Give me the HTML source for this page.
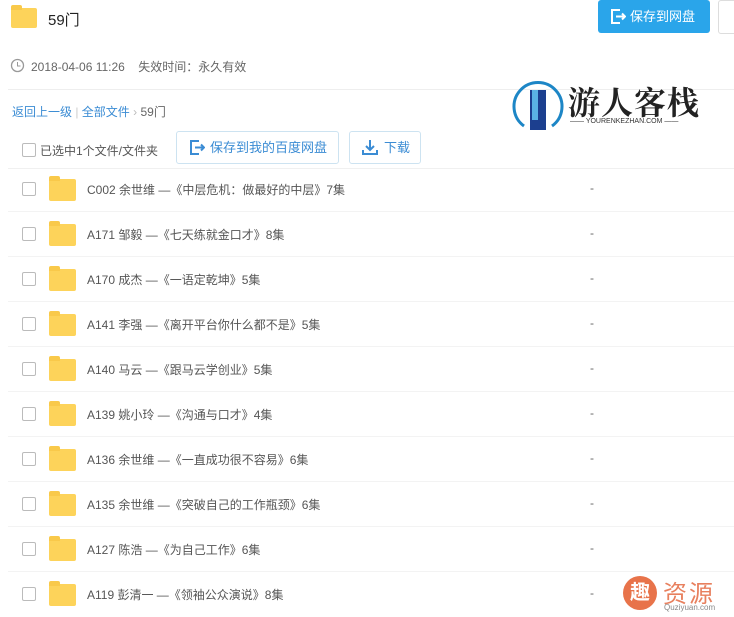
<!DOCTYPE html><html><head><meta charset="utf-8"><style>
body{margin:0;width:734px;height:615px;overflow:hidden;background:#fff;font-family:"Liberation Sans","Noto Sans CJK SC",sans-serif;color:#333;position:relative}
.a{position:absolute}
.fold{position:absolute;width:27px;height:22px;background:#fdd35a;border-radius:2px}
.fold:before{content:"";position:absolute;left:0;top:-3px;width:11px;height:5px;background:#f9c94a;border-radius:2px 2px 0 0}
.cb{position:absolute;width:12px;height:12px;border:1px solid #bbb;border-radius:2px;background:#fff}
.row{position:absolute;left:0;width:734px;height:45px}
.row .t{position:absolute;left:87px;top:14px;font-size:12px;color:#555}
.row .d{position:absolute;left:590px;top:14px;font-size:12px;color:#666}
.row .l{position:absolute;left:8px;right:0;top:44px;height:1px;background:#f3f3f3}
</style></head><body>
<div class="fold" style="left:11px;top:8px;width:26px;height:20px"></div>
<div class="a" style="left:48px;top:9px;font-size:15px;color:#222">59门</div>
<div class="a" style="left:598px;top:0;width:112px;height:33px;background:#2aa5ea;border-radius:3px;color:#fff;font-size:13px;line-height:33px">
<svg class="a" style="left:12px;top:9px" width="16" height="15" viewBox="0 0 16 15"><path d="M10 1H2v13h8M6 7.5h9M12 4.5l3 3-3 3" stroke="#fff" stroke-width="2" fill="none"/></svg>
<span class="a" style="left:32px;top:0">保存到网盘</span></div>
<div class="a" style="left:718px;top:0;width:20px;height:32px;border:1px solid #ddd;border-radius:3px"></div>
<svg class="a" style="left:10px;top:58px" width="15" height="15"><circle cx="7.5" cy="7.5" r="6" stroke="#999" fill="none" stroke-width="1.3"/><path d="M7.5 4v4h3" stroke="#999" fill="none"/></svg>
<div class="a" style="left:31px;top:58px;font-size:12px;color:#666">2018-04-06 11:26 &nbsp;&nbsp; 失效时间：永久有效</div>
<div class="a" style="left:8px;top:89px;width:726px;height:1px;background:#eee"></div>
<div class="a" style="left:12px;top:103px;font-size:12px;color:#3b8cd4">返回上一级 <span style="color:#ccc">|</span> 全部文件 <span style="color:#bbb">›</span> <span style="color:#666">59门</span></div>
<svg class="a" style="left:508px;top:76px" width="60" height="54"><path d="M16 50A24 24 0 1 1 44 50" stroke="#1d86c6" stroke-width="3" fill="none"/><rect x="22" y="14" width="16" height="42" fill="#1c3f8f"/><rect x="24" y="14" width="6" height="30" fill="#5ab2e4"/></svg>
<div class="a" style="left:568px;top:78px;font-size:32px;font-weight:bold;color:#222;letter-spacing:1px;font-family:'Noto Serif CJK SC',serif">游人客栈</div>
<div class="a" style="left:570px;top:118px;font-size:7px;color:#333;letter-spacing:0">—— YOURENKEZHAN.COM ——</div>
<div class="cb" style="left:22px;top:143px"></div>
<div class="a" style="left:40px;top:142px;font-size:12px;color:#555">已选中1个文件/文件夹</div>
<div class="a" style="left:176px;top:131px;width:161px;height:31px;border:1px solid #cde3f1;border-radius:3px;color:#3b8cd4;font-size:13px;line-height:31px">
<svg class="a" style="left:12px;top:8px" width="16" height="15"><path d="M10 1H2v13h8M6 7.5h9M12 4.5l3 3-3 3" stroke="#3b8cd4" stroke-width="2" fill="none"/></svg>
<span class="a" style="left:33px;top:0">保存到我的百度网盘</span></div>
<div class="a" style="left:349px;top:131px;width:70px;height:31px;border:1px solid #cde3f1;border-radius:3px;color:#3b8cd4;font-size:13px;line-height:31px">
<svg class="a" style="left:12px;top:7px" width="16" height="16"><path d="M8 1v10M4 7l4 4 4-4M1 11v4h14v-4" stroke="#3b8cd4" stroke-width="2" fill="none"/></svg>
<span class="a" style="left:34px;top:0">下载</span></div>
<div class="a" style="left:8px;top:168px;width:726px;height:1px;background:#f0f0f0"></div>

<div class="row" style="top:167px"><div class="cb" style="left:22px;top:15px"></div><div class="fold" style="left:49px;top:12px"></div><div class="t">C002 余世维 —《中层危机：做最好的中层》7集</div><div class="d">-</div><div class="l"></div></div>
<div class="row" style="top:212px"><div class="cb" style="left:22px;top:15px"></div><div class="fold" style="left:49px;top:12px"></div><div class="t">A171 邹毅 —《七天练就金口才》8集</div><div class="d">-</div><div class="l"></div></div>
<div class="row" style="top:257px"><div class="cb" style="left:22px;top:15px"></div><div class="fold" style="left:49px;top:12px"></div><div class="t">A170 成杰 —《一语定乾坤》5集</div><div class="d">-</div><div class="l"></div></div>
<div class="row" style="top:302px"><div class="cb" style="left:22px;top:15px"></div><div class="fold" style="left:49px;top:12px"></div><div class="t">A141 李强 —《离开平台你什么都不是》5集</div><div class="d">-</div><div class="l"></div></div>
<div class="row" style="top:347px"><div class="cb" style="left:22px;top:15px"></div><div class="fold" style="left:49px;top:12px"></div><div class="t">A140 马云 —《跟马云学创业》5集</div><div class="d">-</div><div class="l"></div></div>
<div class="row" style="top:392px"><div class="cb" style="left:22px;top:15px"></div><div class="fold" style="left:49px;top:12px"></div><div class="t">A139 姚小玲 —《沟通与口才》4集</div><div class="d">-</div><div class="l"></div></div>
<div class="row" style="top:437px"><div class="cb" style="left:22px;top:15px"></div><div class="fold" style="left:49px;top:12px"></div><div class="t">A136 余世维 —《一直成功很不容易》6集</div><div class="d">-</div><div class="l"></div></div>
<div class="row" style="top:482px"><div class="cb" style="left:22px;top:15px"></div><div class="fold" style="left:49px;top:12px"></div><div class="t">A135 余世维 —《突破自己的工作瓶颈》6集</div><div class="d">-</div><div class="l"></div></div>
<div class="row" style="top:527px"><div class="cb" style="left:22px;top:15px"></div><div class="fold" style="left:49px;top:12px"></div><div class="t">A127 陈浩 —《为自己工作》6集</div><div class="d">-</div><div class="l"></div></div>
<div class="row" style="top:572px"><div class="cb" style="left:22px;top:15px"></div><div class="fold" style="left:49px;top:12px"></div><div class="t">A119 彭清一 —《领袖公众演说》8集</div><div class="d">-</div></div>

<div class="a" style="left:623px;top:576px;width:34px;height:34px;border-radius:50%;background:#e8734a;color:#fff;font-size:20px;line-height:34px;text-align:center;font-weight:bold">趣</div>
<div class="a" style="left:663px;top:574px;font-size:24px;color:#e8805e;letter-spacing:2px">资源</div>
<div class="a" style="left:664px;top:603px;font-size:8px;color:#888">Quziyuan.com</div>
</body></html>
